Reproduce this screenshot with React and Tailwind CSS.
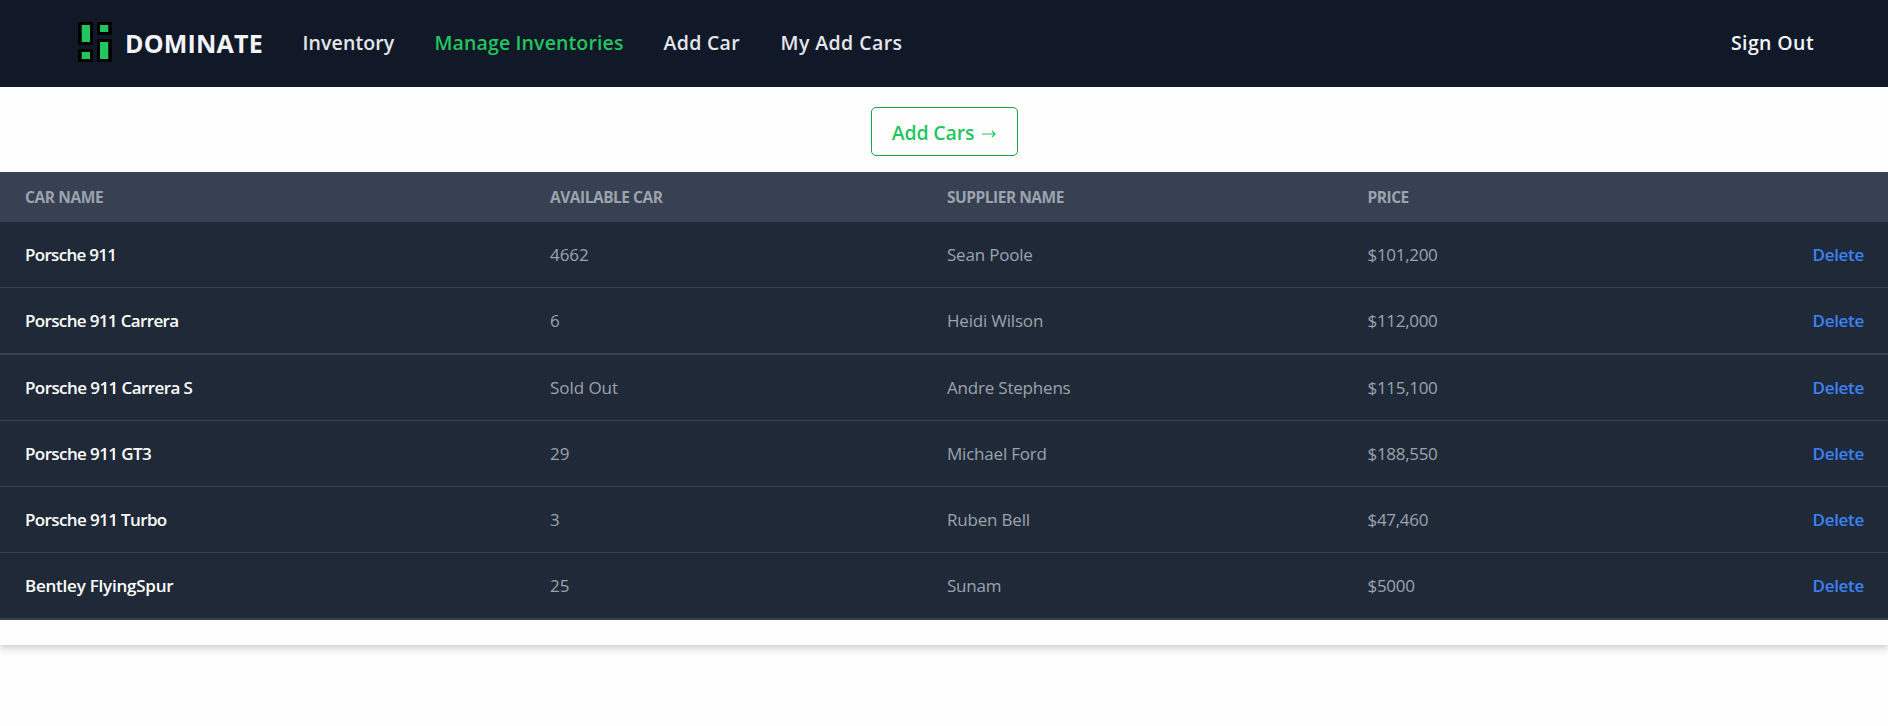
const links = [
  { label: "Inventory", style: "w-[92px] tracking-[0.1px] text-gray-200" },
  { label: "Manage Inventories", style: "w-[189px] tracking-[0.13px] text-[#22c55e]" },
  { label: "Add Car", style: "w-[77px] tracking-[0.3px] text-gray-200" },
  { label: "My Add Cars", style: "w-[122px] tracking-[0.42px] text-gray-200" },
];

const cars = [
  { name: "Porsche 911", spacing: "tracking-[-0.7px]", stock: "4662", supplier: "Sean Poole", price: "$101,200", row: "h-[66px] border-b" },
  { name: "Porsche 911 Carrera", spacing: "tracking-[-0.65px]", stock: "6", supplier: "Heidi Wilson", price: "$112,000", row: "h-[67px] border-b-2" },
  { name: "Porsche 911 Carrera S", spacing: "tracking-[-0.58px]", stock: "Sold Out", supplier: "Andre Stephens", price: "$115,100", row: "h-[66px] border-b" },
  { name: "Porsche 911 GT3", spacing: "tracking-[-0.6px]", stock: "29", supplier: "Michael Ford", price: "$188,550", row: "h-[66px] border-b" },
  { name: "Porsche 911 Turbo", spacing: "tracking-[-0.62px]", stock: "3", supplier: "Ruben Bell", price: "$47,460", row: "h-[66px] border-b" },
  { name: "Bentley FlyingSpur", spacing: "tracking-[-0.23px]", stock: "25", supplier: "Sunam", price: "$5000", row: "h-[67px] border-b-2" },
];

const columns = "grid grid-cols-[525px_397px_420.5px_1fr_auto] items-center";

function Logo() {
  return (
    <svg width="34" height="40" viewBox="0 0 34 40" className="mb-[3px] shrink-0">
      <g fill="#000">
        <rect x="0" y="0" width="15" height="23" rx="1.5" />
        <rect x="19" y="0" width="15" height="13" rx="1.5" />
        <rect x="0" y="27" width="15" height="13" rx="1.5" />
        <rect x="19" y="17" width="15" height="23" rx="1.5" />
      </g>
      <g fill="#22c55e">
        <rect x="3.7" y="3" width="8.3" height="17" />
        <rect x="22" y="3" width="8.3" height="7" />
        <rect x="3.7" y="30" width="8.3" height="7" />
        <rect x="22" y="20" width="8.3" height="17" />
      </g>
    </svg>
  );
}

function Navbar() {
  return (
    <header className="flex h-[87px] items-center bg-[#111827] pr-[74px] pl-[78px] text-[19.5px] font-semibold whitespace-nowrap">
      <Logo />
      <span className="ml-[13px] w-[177.5px] text-[25px] font-bold tracking-[0.2px] text-gray-100">DOMINATE</span>
      <nav className="flex gap-10 pb-0.5">
        {links.map((link) => (
          <a key={link.label} className={link.style}>{link.label}</a>
        ))}
      </nav>
      <a className="ml-auto pb-0.5 tracking-[0.4px] text-gray-100">Sign Out</a>
    </header>
  );
}

export default function App() {
  return (
    <div className="h-[726px] overflow-hidden bg-[#fefefe] font-['Open_Sans','Noto_Sans',sans-serif]">
      <Navbar />
      <div className="flex h-[85px] justify-center pt-5">
        <button className="flex h-[49px] w-[147px] items-center justify-center gap-2 rounded-[5px] border border-[#16a34a] pt-0.5 text-[19.5px] font-semibold tracking-[-0.15px] text-[#22c55e]">
          <span>Add Cars</span>
          <svg width="14" height="8" viewBox="0 0 14 8" fill="none" stroke="currentColor" strokeWidth="1.2" className="mt-0.5">
            <path d="M0 4H13M10 1L13 4L10 7" />
          </svg>
        </button>
      </div>
      <main className="pb-[25px] shadow-[0_5px_8px_0_rgb(0_0_0/0.11),0_2px_5px_0_rgb(0_0_0/0.08)]">
        <div className={`${columns} h-[50px] bg-[#374151] pt-px pr-6 pl-[25px] text-[15.5px] font-bold tracking-[-0.48px] text-[#9ca3af]`}>
          <span className="tracking-[-0.4px]">CAR NAME</span>
          <span>AVAILABLE CAR</span>
          <span>SUPPLIER NAME</span>
          <span>PRICE</span>
        </div>
        {cars.map((car) => (
          <div key={car.name} className={`${columns} ${car.row} border-[#374151] bg-[#1f2937] pt-px pr-6 pl-[25px] text-[17px] text-[#9ca3af]`}>
            <span className={`font-semibold text-white ${car.spacing}`}>{car.name}</span>
            <span className="tracking-[-0.05px]">{car.stock}</span>
            <span className="tracking-[-0.2px]">{car.supplier}</span>
            <span className="tracking-[-0.3px]">{car.price}</span>
            <a className="font-semibold tracking-[-0.3px] text-[#3b82f6]">Delete</a>
          </div>
        ))}
      </main>
    </div>
  );
}
